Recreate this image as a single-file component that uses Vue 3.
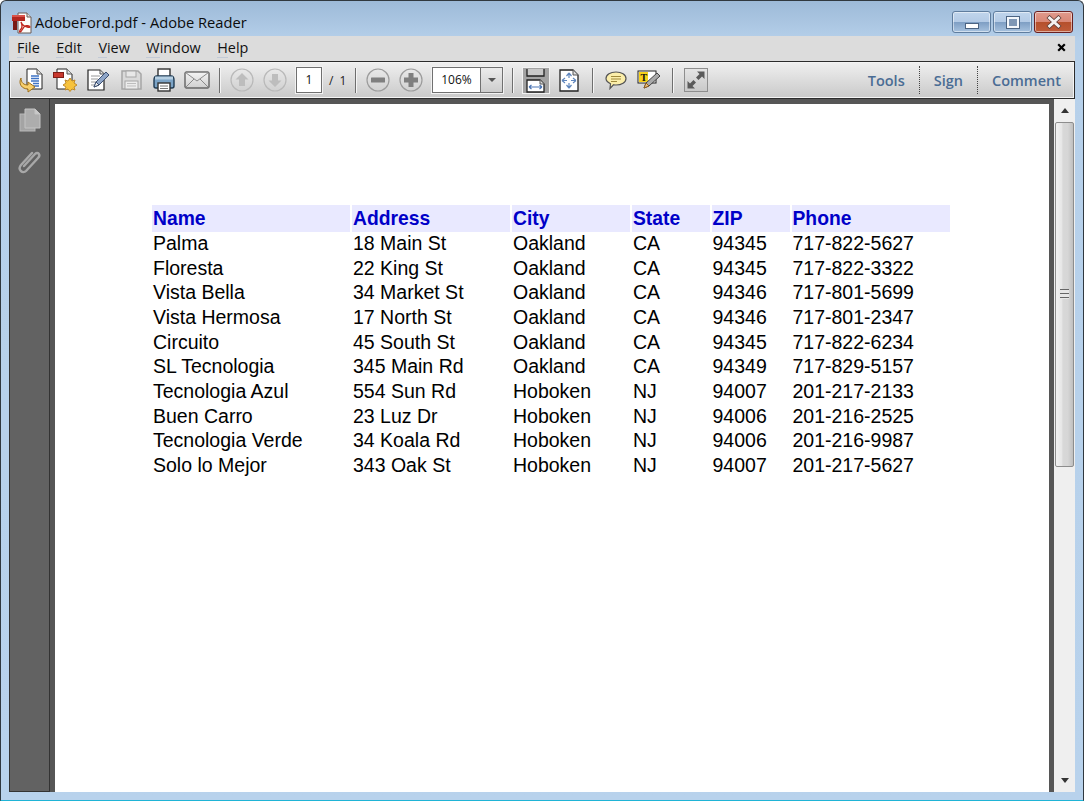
<template>
  <div class="window">
    <header class="titlebar">
      <svg class="app-icon" width="22" height="22" viewBox="0 0 22 22">
        <path d="M7 1h9l4 4v16H7z" fill="#fdfbf8" stroke="#6b5a55" />
        <path d="M16 1v4h4" fill="#ddd" stroke="#6b5a55" />
        <rect x="1" y="3" width="13" height="6" fill="#b3261e" />
        <rect x="1" y="3" width="13" height="2" fill="#d9534a" />
        <rect x="2" y="9" width="4" height="9" fill="#7a1a14" />
        <path d="M10 10c1 3 2 5 0 7-1 1-2 3-1 3 2 0 3-5 5-6 1-1 5 0 5 1s-5 0-7-2c-1-1-2-3-2-3z" fill="none" stroke="#c0271e" stroke-width="1.300" />
      </svg>
      <span class="title">AdobeFord.pdf - Adobe Reader</span>
      <div class="win-buttons">
        <div class="win-btn">
          <span class="min-mark"></span>
        </div>
        <div class="win-btn">
          <span class="max-mark"></span>
        </div>
        <div class="win-btn close">
          <svg width="16" height="14" viewBox="0 0 16 14">
            <path d="M2 1.500l12 11M14 1.500l-12 11" stroke="#5a3a34" stroke-width="4.400" />
            <path d="M2.500 2l11 10M13.500 2l-11 10" stroke="#f5f2f0" stroke-width="3" />
          </svg>
        </div>
      </div>
    </header>

    <div class="frame">
      <nav class="menubar">
        <span v-for="m in menus" :key="m" class="menu-item"><span class="mnemonic">{{ m[0] }}</span>{{ m.slice(1) }}</span>
        <svg class="menu-close" width="9" height="9" viewBox="0 0 9 9">
          <path d="M1.200 1.200l6.600 6.600M7.800 1.200L1.200 7.800" stroke="#000" stroke-width="2.200" />
        </svg>
      </nav>

      <div class="toolbar">
        <div class="tb-btn">
          <svg width="26" height="26" viewBox="0 0 26 26">
            <path d="M8 2h10l5 5v15H8z" fill="#fff" stroke="#222" />
            <path d="M18 2v5h5" fill="#ddd" stroke="#555" />
            <path d="M12 9h8M12 11.500h8M12 14h8M14 16.500h6M14 19h6" stroke="#3f74c6" stroke-width="1.300" />
            <path d="M2 11c0 5 3 7 7 7v-3l7 5-7 5v-3c-6 0-10-5-7-11z" fill="#f7cf6c" stroke="#a0701a" />
          </svg>
        </div>
        <div class="tb-btn">
          <svg width="26" height="26" viewBox="0 0 26 26">
            <path d="M5 2h10l5 5v15H5z" fill="#fff" stroke="#222" />
            <path d="M15 2v5h5" fill="#ddd" stroke="#555" />
            <rect x="1.500" y="5.500" width="10" height="5" fill="#c8382e" stroke="#7f1d17" />
            <path d="M18 11l2 3 3-1-1 3 3 2-3 2 1 3-3-1-2 2.500-2-2.500-3 1 1-3-3-2 3-2-1-3 3 1z" fill="#f7c23c" stroke="#c08a28" />
          </svg>
        </div>
        <div class="tb-btn">
          <svg width="26" height="26" viewBox="0 0 26 26">
            <path d="M3 3h12l4 4v16H3z" fill="#fff" stroke="#222" stroke-width="1.200" />
            <path d="M15 3v4h4" fill="#e4e4e4" stroke="#555" />
            <path d="M6 9h9M6 12h7M6 15h5M6 18h3" stroke="#999" />
            <path d="M9 20l2-5 10-10 3 3-10 10z" fill="#8fa6c8" stroke="#3c4f70" />
            <path d="M9 20l2-5 3 3z" fill="#eee" stroke="#3c4f70" />
          </svg>
        </div>
        <div class="tb-btn">
          <svg width="24" height="24" viewBox="0 0 24 24">
            <path d="M3 3h16l3 3v15H3z" fill="#dadada" stroke="#a6a6a6" stroke-width="1.500" />
            <rect x="7" y="3" width="10" height="6" fill="#e8e8e8" stroke="#a6a6a6" />
            <rect x="6" y="13" width="13" height="8" fill="#ececec" stroke="#a6a6a6" />
            <path d="M8 15.500h9M8 18h9" stroke="#bdbdbd" />
          </svg>
        </div>
        <div class="tb-btn">
          <svg width="26" height="26" viewBox="0 0 26 26">
            <rect x="7" y="2" width="12" height="8" fill="#fff" stroke="#333" stroke-width="1.400" />
            <path d="M3 13c0-3 1-4 3-4h14c2 0 3 1 3 4v6c0 1-1 2-2 2H5c-1 0-2-1-2-2z" fill="#7ba3c6" stroke="#1f3a52" stroke-width="1.400" />
            <rect x="4" y="9.500" width="18" height="3" fill="#b6cfe2" />
            <rect x="7" y="16" width="12" height="8" fill="#fff" stroke="#333" stroke-width="1.400" />
            <path d="M9 19h8M9 21.500h8" stroke="#777" />
          </svg>
        </div>
        <div class="tb-btn">
          <svg width="26" height="18" viewBox="0 0 26 18">
            <rect x="1" y="1" width="24" height="16" rx="1" fill="url(#mailFill)" stroke="#333" />
            <path d="M1.500 1.500L13 10 24.500 1.500M1.500 16.500L10 8M24.500 16.500L16 8" fill="none" stroke="#8a8a8a" />
            <defs>
              <linearGradient id="mailFill" x1="0" y1="0" x2="0" y2="1">
                <stop offset="0" stop-color="#f4f4f4" />
                <stop offset="1" stop-color="#cfcfcf" />
              </linearGradient>
            </defs>
          </svg>
        </div>

        <span class="sep"></span>

        <div class="tb-btn">
          <svg width="24" height="24" viewBox="0 0 24 24" class="round">
            <circle cx="12" cy="12" r="11" fill="none" stroke="#b9b9b9" stroke-width="1.200" />
            <path d="M12 5l6.500 6.500H15V18H9v-6.500H5.500z" fill="#bdbdbd" />
          </svg>
        </div>
        <div class="tb-btn">
          <svg width="24" height="24" viewBox="0 0 24 24" class="round">
            <circle cx="12" cy="12" r="11" fill="none" stroke="#b9b9b9" stroke-width="1.200" />
            <path d="M12 19l-6.500-6.500H9V6h6v6.500h3.500z" fill="#bdbdbd" />
          </svg>
        </div>
        <div class="page-box">1</div>
        <span class="page-count">/ 1</span>

        <span class="sep after-count"></span>

        <div class="tb-btn">
          <svg width="24" height="24" viewBox="0 0 24 24">
            <circle cx="12" cy="12" r="11" fill="none" stroke="#9c9c9c" stroke-width="1.200" />
            <rect x="5" y="9.500" width="14" height="5" rx="0.500" fill="#7f7f7f" />
          </svg>
        </div>
        <div class="tb-btn">
          <svg width="24" height="24" viewBox="0 0 24 24">
            <circle cx="12" cy="12" r="11" fill="none" stroke="#9c9c9c" stroke-width="1.200" />
            <path d="M9.500 5h5v4.500H19v5h-4.500V19h-5v-4.500H5v-5h4.500z" fill="#7f7f7f" />
          </svg>
        </div>
        <div class="zoom-box">
          <span class="zoom-value">106%</span>
          <span class="zoom-arrow"></span>
        </div>

        <span class="sep after-zoom"></span>

        <div class="tb-btn active">
          <svg width="20" height="24" viewBox="0 0 20 24">
            <path d="M1 0v7h17V0" fill="#c8c8c8" stroke="#222" stroke-width="1.300" />
            <path d="M1 11h13l4 4v8H1z" fill="#fff" stroke="#222" stroke-width="1.300" />
            <path d="M14 11v4h4" fill="#ddd" stroke="#555" />
            <path d="M3 18h13M3 18l2.500-2M3 18l2.500 2M16 18l-2.500-2M16 18l-2.500 2" fill="none" stroke="#4d76b5" stroke-width="1.200" />
          </svg>
        </div>
        <div class="tb-btn">
          <svg width="20" height="23" viewBox="0 0 20 23">
            <path d="M1 1h13l5 5v16H1z" fill="#fff" stroke="#222" stroke-width="1.300" />
            <path d="M14 1v5h5" fill="#ddd" stroke="#555" />
            <path d="M10 4v5M10 14v5M3 11.500h5M12 11.500h5M10 4L7.500 7M10 4l2.500 3M10 19l-2.500-3M10 19l2.500-3M3 11.500L6 9M3 11.500L6 14M17 11.500L14 9M17 11.500L14 14" fill="none" stroke="#5f86bd" stroke-width="1.200" />
          </svg>
        </div>

        <span class="sep wide"></span>

        <div class="tb-btn">
          <svg width="22" height="20" viewBox="0 0 22 20">
            <path d="M11 2c5.500 0 10 2.500 10 6.500S16.500 15 11 15c-1 0-2 0-2.500-.2L5 18.500l.5-4.800C3 12.500 1 10.700 1 8.500 1 4.500 5.500 2 11 2z" fill="#fbeeaa" stroke="#555" stroke-width="1.200" />
            <path d="M6 6.500h10M6 9h10M6 11.500h6" stroke="#a08a3c" />
          </svg>
        </div>
        <div class="tb-btn">
          <svg width="24" height="22" viewBox="0 0 24 22">
            <rect x="1" y="2" width="18" height="12" fill="#fff" stroke="#222" />
            <rect x="2" y="3" width="9" height="10" fill="#f7d21c" />
            <text x="3.600" y="11.500" class="icon-t">T</text>
            <path d="M7 19l2-5 11-10 3 3-11 10z" fill="#a9a9a9" stroke="#444" />
            <path d="M7 19l2-5 3 3z" fill="#f0c078" stroke="#8a5a20" />
          </svg>
        </div>

        <span class="sep wide"></span>

        <div class="tb-btn">
          <span class="full-box">
            <svg width="20" height="20" viewBox="0 0 20 20">
              <path d="M18.500 1.500v7.500l-2.500-2.500-3.500 3.500-2.500-2.500 3.500-3.500L11 1.500zM1.500 18.500V11l2.500 2.500 3.500-3.500 2.500 2.500-3.500 3.500 2.500 2.500z" fill="#5a5a5a" />
            </svg>
          </span>
        </div>

        <div class="panels">
          <span class="panel-link">Tools</span>
          <span class="panel-link">Sign</span>
          <span class="panel-link">Comment</span>
        </div>
      </div>

      <div class="workspace">
        <aside class="sidebar">
          <svg width="22" height="24" viewBox="0 0 22 24">
            <rect x="1" y="6" width="15" height="17" fill="#a4a4a4" stroke="#b8b8b8" />
            <path d="M6 1h10l5 5v14H6z" fill="#adadad" stroke="#c4c4c4" />
            <path d="M16 1v5h5" fill="#c9c9c9" stroke="#c4c4c4" />
          </svg>
          <svg class="clip" width="26" height="26" viewBox="0 0 26 26">
            <path d="M7 17L18 5c3-3 6 1 3 4L9 22c-3 3-9-1-5-6L15 4" fill="none" stroke="#a8a8a8" stroke-width="2.400" stroke-linecap="round" />
          </svg>
        </aside>

        <main class="viewer">
          <div class="page">
            <div class="data-table">
              <div class="row head">
                <div v-for="h in headers" :key="h" class="cell">{{ h }}</div>
              </div>
              <div v-for="r in rows" :key="r[0]" class="row">
                <div v-for="(v, i) in r" :key="i" class="cell">{{ v }}</div>
              </div>
            </div>
          </div>
        </main>

        <div class="scrollbar">
          <div class="scroll-btn"><span class="arrow up"></span></div>
          <div class="thumb">
            <span class="grip"></span>
          </div>
          <div class="scroll-track"></div>
          <div class="scroll-btn"><span class="arrow down"></span></div>
        </div>
      </div>
    </div>
  </div>
</template>

<script setup>
const menus = ['File', 'Edit', 'View', 'Window', 'Help']

const headers = ['Name', 'Address', 'City', 'State', 'ZIP', 'Phone']

const rows = [
  ['Palma', '18 Main St', 'Oakland', 'CA', '94345', '717-822-5627'],
  ['Floresta', '22 King St', 'Oakland', 'CA', '94345', '717-822-3322'],
  ['Vista Bella', '34 Market St', 'Oakland', 'CA', '94346', '717-801-5699'],
  ['Vista Hermosa', '17 North St', 'Oakland', 'CA', '94346', '717-801-2347'],
  ['Circuito', '45 South St', 'Oakland', 'CA', '94345', '717-822-6234'],
  ['SL Tecnologia', '345 Main Rd', 'Oakland', 'CA', '94349', '717-829-5157'],
  ['Tecnologia Azul', '554 Sun Rd', 'Hoboken', 'NJ', '94007', '201-217-2133'],
  ['Buen Carro', '23 Luz Dr', 'Hoboken', 'NJ', '94006', '201-216-2525'],
  ['Tecnologia Verde', '34 Koala Rd', 'Hoboken', 'NJ', '94006', '201-216-9987'],
  ['Solo lo Mejor', '343 Oak St', 'Hoboken', 'NJ', '94007', '201-217-5627']
]
</script>

<style scoped>
.window {
  width: 1084px;
  height: 801px;
  box-sizing: border-box;
  display: flex;
  flex-direction: column;
  overflow: hidden;
  border: 1px solid #30383f;
  border-bottom-color: #1fb4d6;
  border-radius: 6px 6px 0 0;
  background: linear-gradient(to bottom, #9dbad8 0, #b6d0ea 40px, #b8d2ec 100%);
  font-family: "Open Sans", "Liberation Sans", sans-serif;
}

.titlebar {
  height: 35px;
  flex: none;
  display: flex;
  align-items: flex-start;
  padding: 10px 10px 0 10px;
  box-sizing: border-box;
}

.app-icon {
  flex: none;
  margin-top: 1px;
}

.title {
  margin: 1px 0 0 2px;
  font-size: 14.700px;
  line-height: 20px;
  color: #0c0c0c;
}

.win-buttons {
  margin-left: auto;
  display: flex;
  gap: 2px;
}

.win-btn {
  width: 39px;
  height: 22px;
  box-sizing: border-box;
  border: 1px solid #5f7d9e;
  border-radius: 3px;
  box-shadow: inset 0 0 0 1px rgba(255, 255, 255, 0.5);
  background: linear-gradient(to bottom, #c0d5ec 0, #b3cae5 50%, #7f9fc4 52%, #a7c2df 100%);
  display: flex;
  align-items: center;
  justify-content: center;
}

.win-btn.close {
  border-color: #6a1f1f;
  background: linear-gradient(to bottom, #e09a8c 0, #d98877 48%, #b54f2c 50%, #bf5c3a 100%);
}

.min-mark {
  width: 12px;
  height: 4px;
  margin-top: 8px;
  background: #fff;
  border: 1px solid #4c6482;
}

.max-mark {
  width: 8px;
  height: 7px;
  border: 2px solid #f4f7fb;
  outline: 1px solid #4c6482;
  background: #7f97b5;
}

.frame {
  flex: 1;
  min-height: 0;
  display: flex;
  flex-direction: column;
  margin: 0 8px 8px 8px;
}

.menubar {
  height: 25px;
  flex: none;
  box-sizing: border-box;
  display: flex;
  align-items: center;
  background: #dcdcdc;
  padding: 0 0 2px 8px;
  font-size: 14.400px;
  color: #111;
}

.menu-item {
  margin-right: 16.500px;
}

.mnemonic {
  border-bottom: 1px solid #c2cad6;
}

.menu-close {
  margin-left: auto;
  margin-right: 9px;
}

.toolbar {
  height: 38px;
  flex: none;
  box-sizing: border-box;
  display: flex;
  align-items: center;
  padding-left: 5px;
  border: 1px solid #2c2c2c;
  box-shadow: inset 0 0 0 1px #f4f4f4;
  background: linear-gradient(to bottom, #f0f0f0, #c9c9c9);
}

.tb-btn {
  width: 33px;
  height: 32px;
  flex: none;
  display: flex;
  align-items: center;
  justify-content: center;
}

.tb-btn.active svg {
  box-sizing: content-box;
  padding: 1px 3px 0;
  background: #a3a3a3;
  border: 1px solid #f2f2f2;
}

.sep {
  flex: none;
  width: 1px;
  height: 25px;
  margin: 0 4px 0 6px;
  background: #6e6e6e;
  border-right: 1px solid #f5f5f5;
}

.sep.wide {
  margin: 0 5px 0 7px;
}

.sep.after-count {
  margin-left: 9px;
}

.sep.after-zoom {
  margin: 0 5px 0 9px;
}

.page-box {
  width: 26px;
  height: 26px;
  flex: none;
  box-sizing: border-box;
  margin-left: 5px;
  border: 1px solid #707070;
  outline: 1px solid #f2f2f2;
  background: #fff;
  font-size: 12px;
  line-height: 24px;
  text-align: center;
  color: #111;
}

.page-count {
  width: 17px;
  flex: none;
  margin-left: 7px;
  font-size: 12px;
  word-spacing: 3px;
  white-space: nowrap;
  color: #222;
}

.zoom-box {
  width: 71px;
  height: 26px;
  flex: none;
  box-sizing: border-box;
  margin-left: 5px;
  display: flex;
  border: 1px solid #707070;
  outline: 1px solid #f2f2f2;
  background: #fff;
}

.zoom-value {
  width: 47px;
  font-size: 12px;
  line-height: 24px;
  text-align: center;
  color: #111;
}

.zoom-arrow {
  flex: 1;
  position: relative;
  border-left: 1px solid #707070;
  background: linear-gradient(to bottom, #ececec, #cdcdcd);
}

.zoom-arrow::after {
  content: "";
  position: absolute;
  left: 7px;
  top: 10px;
  border: 4px solid transparent;
  border-top-color: #555;
  border-bottom: 0;
}

.full-box {
  width: 24px;
  height: 24px;
  box-sizing: border-box;
  display: flex;
  align-items: center;
  justify-content: center;
  border: 1px solid #8e8e8e;
  background: linear-gradient(to bottom, #e4e4e4, #c9c9c9);
}

.icon-t {
  font-family: "Liberation Serif", serif;
  font-size: 10px;
  font-weight: bold;
  fill: #111;
}

.panels {
  margin-left: auto;
  display: flex;
  align-items: center;
  height: 28px;
}

.panel-link {
  height: 28px;
  font-size: 14.500px;
  font-weight: 600;
  color: #4a6c94;
  padding: 0 14px;
  line-height: 30px;
  border-left: 1px dotted #444;
}

.panel-link:first-child {
  border-left: 0;
}

.panel-link:last-child {
  padding-right: 13px;
}

.workspace {
  flex: 1;
  min-height: 0;
  display: flex;
}

.sidebar {
  width: 41px;
  flex: none;
  box-sizing: border-box;
  display: flex;
  flex-direction: column;
  align-items: center;
  gap: 17px;
  padding: 9px 0 0 0;
  background: #626262;
  border: 1px solid #333;
  border-top: 0;
  box-shadow: 1px 0 0 #b0b0b0;
}

.viewer {
  flex: 1;
  min-width: 0;
  display: flex;
  box-sizing: border-box;
  padding: 5px 5px 0 5px;
  background: #565656;
}

.page {
  flex: 1;
  background: #fff;
  padding: 101px 0 0 97px;
}

.data-table {
  width: 798px;
  font-family: "Liberation Sans", Arial, sans-serif;
  font-size: 19.500px;
  color: #000;
}

.row {
  display: grid;
  grid-template-columns: 198px 158px 118px 77.500px 78px 158.500px;
  column-gap: 2px;
  height: 24.670px;
  line-height: 22px;
}

.row.head {
  height: 27px;
  line-height: 27px;
  font-size: 19.300px;
  font-weight: bold;
  color: #0000c8;
}

.row.head .cell {
  background: #e9e9ff;
}

.cell {
  padding-left: 1px;
  white-space: nowrap;
}

.scrollbar {
  width: 21px;
  flex: none;
  box-sizing: border-box;
  padding: 0 1px;
  display: flex;
  flex-direction: column;
  background: #efefef;
}

.scroll-btn {
  height: 23px;
  flex: none;
  display: flex;
  align-items: center;
  justify-content: center;
}

.arrow {
  width: 0;
  height: 0;
  border-left: 4.500px solid transparent;
  border-right: 4.500px solid transparent;
}

.arrow.up {
  border-bottom: 5px solid #333;
}

.arrow.down {
  border-top: 5px solid #333;
}

.thumb {
  height: 345px;
  flex: none;
  box-sizing: border-box;
  display: flex;
  align-items: flex-start;
  justify-content: center;
  padding-top: 166px;
  border: 1px solid #8d8d8d;
  border-radius: 2px;
  background: linear-gradient(to right, #f2f2f2 0, #e6e6e6 35%, #d8d8d8 40%, #d6d6d6 70%, #bfbfbf 100%);
}

.grip {
  width: 9px;
  height: 10px;
  background: repeating-linear-gradient(to bottom, #666 0, #666 1.500px, #e6e6e6 1.500px, #e6e6e6 4px);
}

.scroll-track {
  flex: 1;
}
</style>

<style>
html,
body {
  margin: 0;
  background: #fff;
  overflow: hidden;
}
</style>
